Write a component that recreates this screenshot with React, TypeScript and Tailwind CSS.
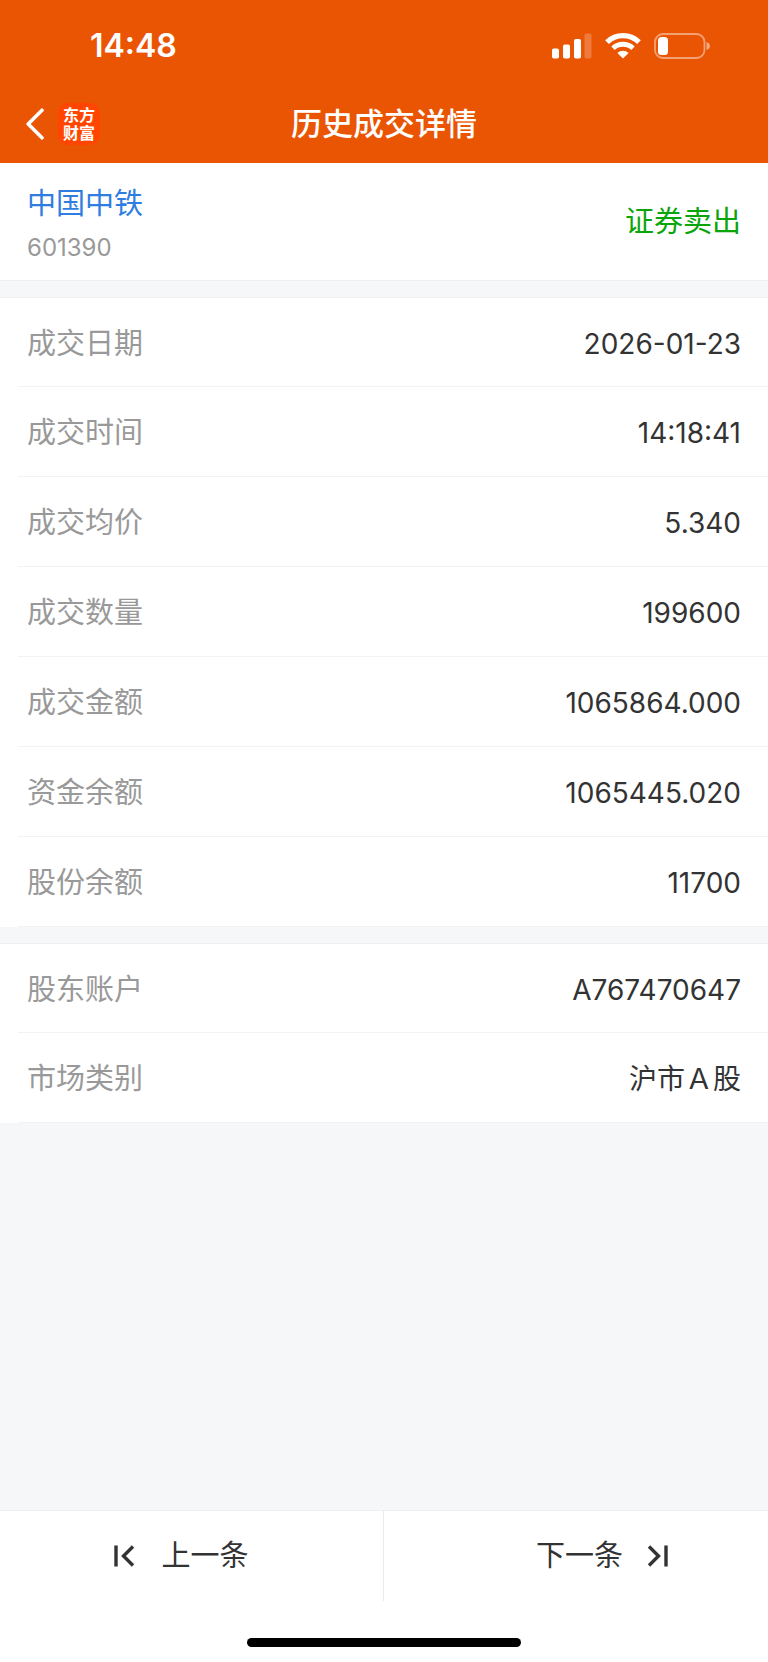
type Row = { label: string; value: string };

const tradeRows: Row[] = [
  { label: "成交日期", value: "2026-01-23" },
  { label: "成交时间", value: "14:18:41" },
  { label: "成交均价", value: "5.340" },
  { label: "成交数量", value: "199600" },
  { label: "成交金额", value: "1065864.000" },
  { label: "资金余额", value: "1065445.020" },
  { label: "股份余额", value: "11700" },
];

const accountRows: Row[] = [
  { label: "股东账户", value: "A767470647" },
  { label: "市场类别", value: "沪市Ａ股" },
];

const StatusBar = () => (
  <div className="flex h-[92px] items-center justify-between pr-[57px] pl-[90px] text-white">
    <span className="text-[32px] leading-8 font-semibold">14:48</span>
    <div className="flex items-center gap-[13px]">
      <svg width="40" height="26" viewBox="0 0 40 26" fill="currentColor">
        <rect x="0" y="15.5" width="7" height="10" rx="1.8" />
        <rect x="11" y="11.5" width="7" height="14" rx="1.8" />
        <rect x="22" y="6" width="7" height="19.5" rx="1.8" />
        <rect x="32.5" y="0.5" width="7" height="25" rx="1.8" opacity="0.22" />
      </svg>
      <svg width="36" height="26" viewBox="0 0 36 26" fill="none" stroke="currentColor">
        <path d="M2 9.2a23 23 0 0 1 32 0" strokeWidth="5.2" />
        <path d="M8 15.3a14.6 14.6 0 0 1 20 0" strokeWidth="5" />
        <path
          d="M18 25.6l-5.6-5.6a8.4 8.4 0 0 1 11.2 0z"
          fill="currentColor"
          stroke="none"
        />
      </svg>
      <svg width="57" height="26" viewBox="0 0 57 26" fill="none">
        <rect
          x="1"
          y="1"
          width="49.5"
          height="24"
          rx="8"
          stroke="currentColor"
          strokeWidth="1.8"
          opacity="0.45"
        />
        <rect x="4" y="4" width="10" height="18" rx="3.5" fill="currentColor" />
        <path d="M52.5 9c4.6 1.2 4.6 6.8 0 8z" fill="currentColor" opacity="0.5" />
      </svg>
    </div>
  </div>
);

const NavBar = () => (
  <div className="grid h-[71px] grid-cols-[1fr_auto_1fr] items-center px-[26px] pb-2">
    <div className="flex items-center gap-[14px]">
      <button type="button" aria-label="返回" className="text-white">
        <svg width="18" height="32" viewBox="0 0 18 32" fill="none">
          <path
            d="M16 2.2L2.2 16L16 29.8"
            stroke="currentColor"
            strokeWidth="3.6"
            strokeLinecap="round"
            strokeLinejoin="round"
          />
        </svg>
      </button>
      <div className="flex size-[42px] flex-col items-center justify-center rounded-[10px] bg-[#ff4500] text-[16px] leading-[18px] font-bold text-white">
        <span>东方</span>
        <span>财富</span>
      </div>
    </div>
    <h1 className="text-[31px] leading-10 font-medium text-white">
      历史成交详情
    </h1>
  </div>
);

const DetailList = ({ rows }: { rows: Row[] }) => (
  <dl className="border-t border-[#eeefef] bg-white">
    {rows.map((row) => (
      <div
        key={row.label}
        className="ml-[18px] flex h-[90px] items-center justify-between border-b border-[#f2f3f4] pt-[3px] pr-[27px] pl-[9px] first:h-[89px]"
      >
        <dt className="text-[29px] leading-10 text-[#999999]">{row.label}</dt>
        <dd className="text-[28px] leading-10 text-[#333333]">{row.value}</dd>
      </div>
    ))}
  </dl>
);

const App = () => {
  return (
    <div className="flex min-h-screen flex-col bg-[#f6f7f9] font-['Inter','Noto_Sans_CJK_SC',sans-serif]">
      <header className="bg-[#ea5504]">
        <StatusBar />
        <NavBar />
      </header>

      <main className="flex flex-1 flex-col gap-4">
        <section className="flex h-[118px] items-center justify-between border-b border-[#eeefef] bg-white px-[27px]">
          <div className="pt-2">
            <a href="#stock" className="block text-[29px] leading-10 text-[#2f7de1]">
              中国中铁
            </a>
            <p className="mt-1 text-[24px] leading-10 text-[#999999]">601390</p>
          </div>
          <span className="text-[29px] leading-10 text-[#0aa50a]">证券卖出</span>
        </section>
        <DetailList rows={tradeRows} />
        <DetailList rows={accountRows} />
      </main>

      <footer className="border-t border-[#eeefef] bg-white text-[#333333]">
        <div className="grid h-[90px] grid-cols-2 text-[29px] leading-10">
          <button
            type="button"
            className="flex items-center justify-center gap-[26px] border-r border-[#ebebeb] pr-5"
          >
            <svg width="21" height="22" viewBox="0 0 21 22" fill="none" stroke="currentColor" strokeWidth="3.4">
              <path d="M2 0.5v21M19 1.5L9.5 11l9.5 9.5" />
            </svg>
            上一条
          </button>
          <button
            type="button"
            className="flex items-center justify-center gap-6 pl-[52px]"
          >
            下一条
            <svg width="21" height="22" viewBox="0 0 21 22" fill="none" stroke="currentColor" strokeWidth="3.4">
              <path d="M19 0.5v21M2 1.5l9.5 9.5L2 20.5" />
            </svg>
          </button>
        </div>
        <div className="flex h-[61px] items-end justify-center pb-[15px]">
          <div className="h-[9px] w-[274px] rounded-full bg-black" />
        </div>
      </footer>
    </div>
  );
};

export default App;
